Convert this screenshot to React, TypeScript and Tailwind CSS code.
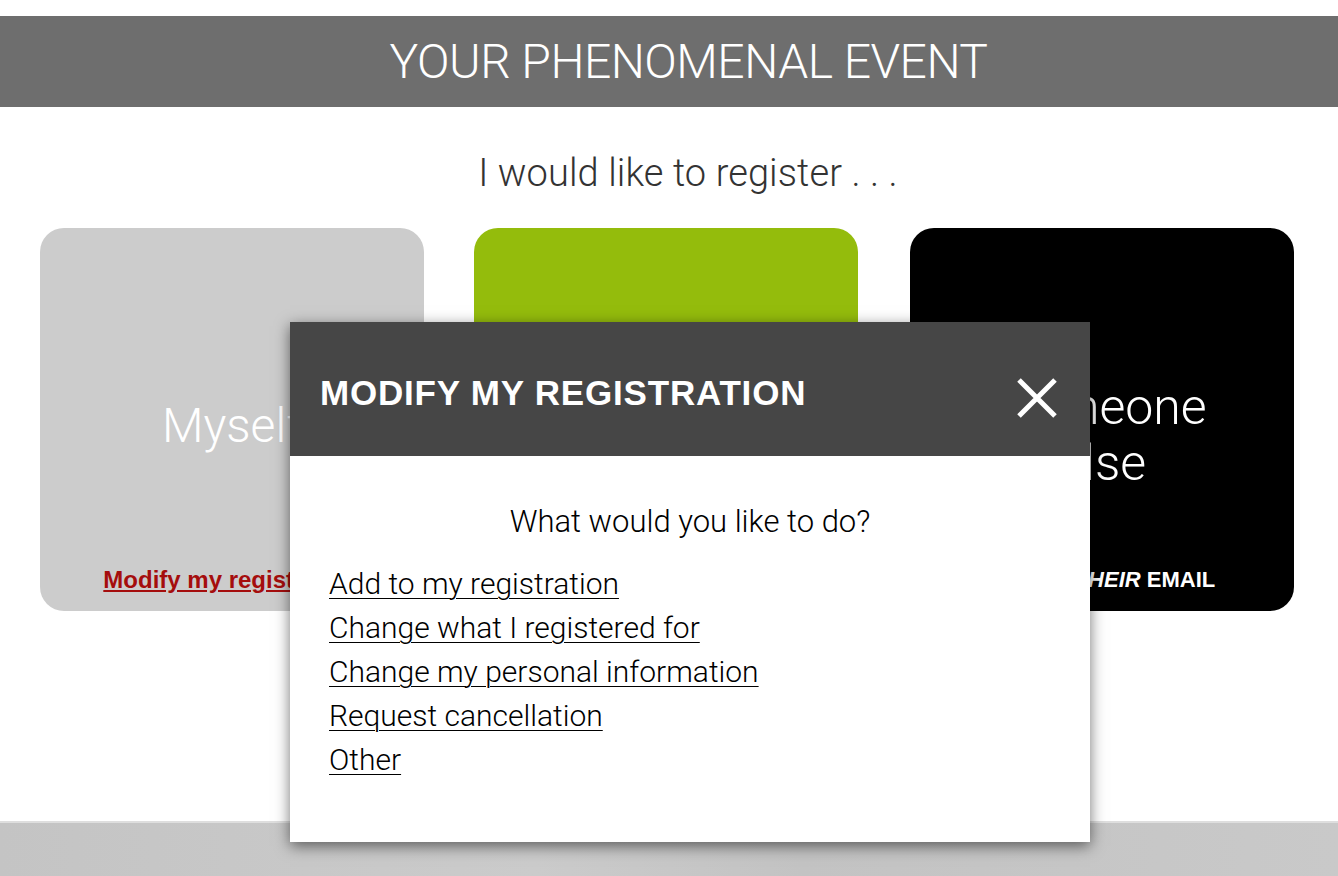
import React from 'react'

const light = "font-['Roboto','Helvetica_Neue',sans-serif] font-light"
const bold = "font-['Liberation_Sans',Arial,sans-serif] font-bold"

const options = [
  'Add to my registration',
  'Change what I registered for',
  'Change my personal information',
  'Request cancellation',
  'Other',
]

function CloseIcon() {
  return (
    <svg width="42" height="42" viewBox="0 0 42 42" fill="none">
      <path d="M3 3 L39 39 M39 3 L3 39" stroke="white" strokeWidth="5" />
    </svg>
  )
}

function ModifyModal() {
  return (
    <div className="absolute left-[290px] top-[322px] w-[800px] h-[520px] bg-white shadow-[0_4px_14px_rgba(0,0,0,0.55)]">
      <div className="h-[134px] bg-[#464646] flex items-center justify-between pl-[30px] pr-[32px] pt-[8px]">
        <h2 className={`${bold} text-[35px] text-white tracking-[0.8px]`}>MODIFY MY REGISTRATION</h2>
        <button className="pt-[10px]">
          <CloseIcon />
        </button>
      </div>
      <div className="px-[39px] pt-[46px]">
        <p className={`${light} text-[31px] text-black text-center leading-[40px]`}>What would you like to do?</p>
        <ul className="mt-[22px] flex flex-col">
          {options.map(o => (
            <li key={o} className="h-[44px]">
              <a href="#" className={`${light} text-[30px] leading-[40px] text-black underline underline-offset-[4px] decoration-1`}>
                {o}
              </a>
            </li>
          ))}
        </ul>
      </div>
    </div>
  )
}

export default function App() {
  return (
    <div className="relative min-h-[876px] bg-white overflow-hidden">
      <div className="pt-4">
        <header className="h-[91px] bg-[#6e6e6e] flex items-center justify-center pl-[39px]">
          <h1 className={`${light} text-[48px] text-white tracking-[-0.5px]`}>YOUR PHENOMENAL EVENT</h1>
        </header>
      </div>

      <p className={`${light} text-center text-[38px] tracking-[0.1px] text-[#333] mt-[44px] leading-[44px] pl-[38px]`}>
        I would like to register . . .
      </p>

      <div className="mt-[33px] flex pl-[40px] gap-[50px]">
        <div className="w-[384px] h-[383px] rounded-[24px] bg-[#cccccc] flex flex-col items-center">
          <div className="flex-1 flex items-center justify-center pt-[62px]">
            <span className={`${light} text-[48px] text-white`}>Myself</span>
          </div>
          <a href="#" className={`${bold} text-[24px] text-[#a50d0d] underline mb-[13px]`}>Modify my registration</a>
        </div>
        <div className="w-[384px] h-[383px] rounded-[24px] bg-[#94bc0c] flex flex-col items-center">
          <div className="flex-1 flex items-center justify-center pt-[62px]">
            <span className={`${light} text-[48px] text-white text-center leading-[56px]`}>My group</span>
          </div>
        </div>
        <div className="w-[384px] h-[383px] rounded-[24px] bg-black flex flex-col items-center ml-[2px]">
          <div className="flex-1 flex items-center justify-center pt-[78px]">
            <span className={`${light} text-[50px] text-white text-center leading-[56px]`}>
              Someone<br />else
            </span>
          </div>
          <span className={`${bold} text-[22px] text-white mb-[15px] pl-[8px]`}>
            I HAVE <em>THEIR</em> EMAIL
          </span>
        </div>
      </div>

      <footer className="mt-[210px] h-[60px] border-t-2 border-[#dedede] bg-[linear-gradient(90deg,#c4c4c4,#cbcbcb_40%,#c3c3c3_60%,#c9c9c9)]" />

      <ModifyModal />
    </div>
  )
}
